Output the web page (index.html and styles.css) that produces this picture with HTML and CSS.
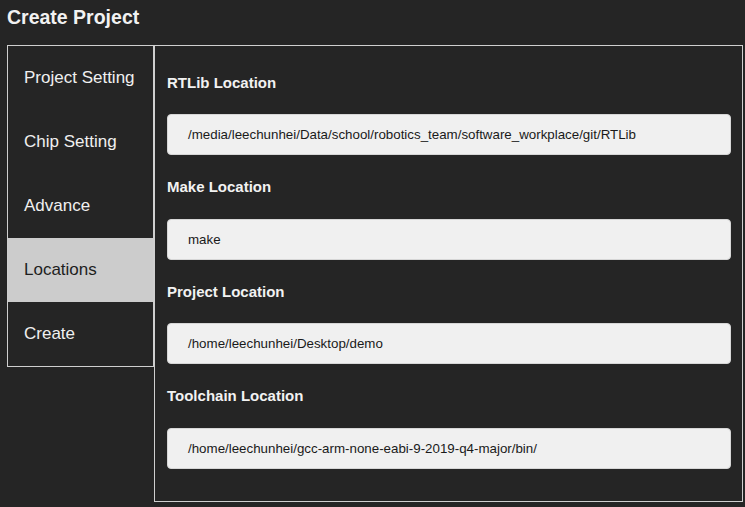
FILE: index.html
```html
<!DOCTYPE html>
<html>
<head>
<meta charset="utf-8">
<link rel="stylesheet" href="styles.css">
</head>
<body>
<div class="page">
  <h1 class="title">Create Project</h1>
  <div class="layout">
    <nav class="sidebar">
      <div class="nav-item">Project Setting</div>
      <div class="nav-item">Chip Setting</div>
      <div class="nav-item">Advance</div>
      <div class="nav-item active">Locations</div>
      <div class="nav-item">Create</div>
    </nav>
    <main class="panel">
      <div class="group">
        <label class="label">RTLib Location</label>
        <div class="field">/media/leechunhei/Data/school/robotics_team/software_workplace/git/RTLib</div>
      </div>
      <div class="group">
        <label class="label">Make Location</label>
        <div class="field">make</div>
      </div>
      <div class="group">
        <label class="label">Project Location</label>
        <div class="field">/home/leechunhei/Desktop/demo</div>
      </div>
      <div class="group">
        <label class="label">Toolchain Location</label>
        <div class="field">/home/leechunhei/gcc-arm-none-eabi-9-2019-q4-major/bin/</div>
      </div>
    </main>
  </div>
</div>
</body>
</html>
```
FILE: styles.css
```css
html, body {
  margin: 0;
  padding: 0;
  background: #252525;
  color: #eeeeee;
  font-family: "Liberation Sans", Arial, sans-serif;
}
.page {
  padding: 6px 2px 0 7px;
}
.title {
  margin: 0 0 16px 0;
  font-size: 19.5px;
  line-height: 23px;
  font-weight: bold;
  color: #f2f2f2;
}
.layout {
  display: flex;
  align-items: flex-start;
}
.sidebar {
  width: 147px;
  box-sizing: border-box;
  border: 1px solid #cfcfcf;
  display: flex;
  flex-direction: column;
}
.nav-item {
  height: 64px;
  display: flex;
  align-items: center;
  padding-left: 16px;
  font-size: 17px;
  color: #f0f0f0;
}
.nav-item.active {
  background: #cccccc;
  color: #1e1e1e;
}
.panel {
  flex: 1;
  box-sizing: border-box;
  border: 1px solid #cfcfcf;
  padding: 4.5px 11px 32.5px 12px;
}
.label {
  display: block;
  margin: 23px 0 23.5px 0;
  font-size: 15px;
  line-height: 17px;
  font-weight: bold;
  color: #f2f2f2;
}
.field {
  height: 41px;
  box-sizing: border-box;
  background: #f0f0f0;
  border: 1px solid #d6d6d6;
  border-radius: 4px;
  padding-left: 20px;
  display: flex;
  align-items: center;
  font-size: 13.33px;
  color: #1a1a1a;
  white-space: nowrap;
  overflow: hidden;
}
```
